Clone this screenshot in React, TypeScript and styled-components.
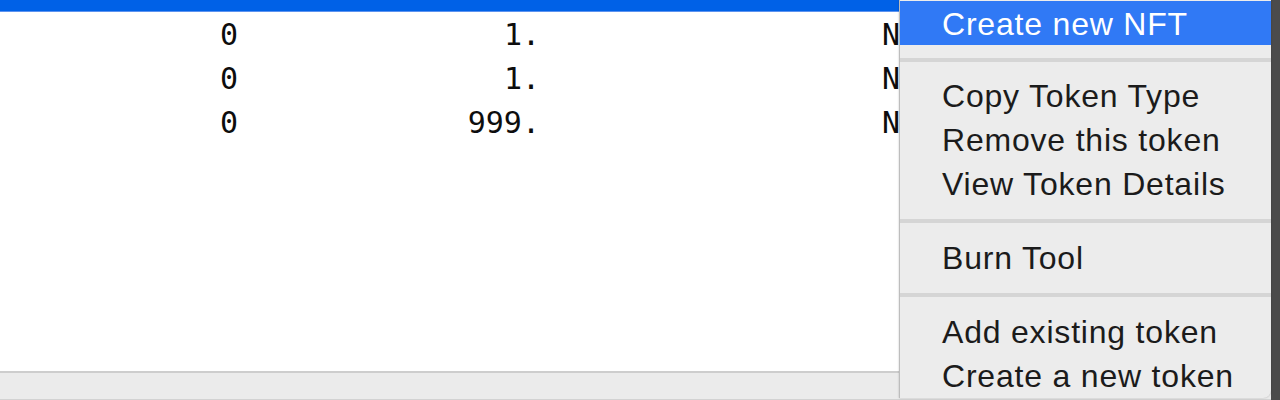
import styled, { createGlobalStyle } from "styled-components";

const GlobalStyle = createGlobalStyle`
  html, body {
    margin: 0;
    padding: 0;
    width: 1280px;
    height: 400px;
    overflow: hidden;
    background: #fff;
  }
`;

const rows = [
  { locked: "0", amount: "1.", kind: "NFT" },
  { locked: "0", amount: "1.", kind: "NFT" },
  { locked: "0", amount: "999.", kind: "NFT" },
];

type MenuEntry = { label: string; active?: boolean } | "sep";

const menu: MenuEntry[] = [
  { label: "Create new NFT", active: true },
  "sep",
  { label: "Copy Token Type" },
  { label: "Remove this token" },
  { label: "View Token Details" },
  "sep",
  { label: "Burn Tool" },
  "sep",
  { label: "Add existing token" },
  { label: "Create a new token" },
];

const App = () => {
  return (
    <>
      <GlobalStyle />
      <Screen>
        <Window>
          <HeaderBar />
          <Table>
            {rows.map((r, i) => (
              <Row key={i}>
                <NumCell>{r.locked}</NumCell>
                <NumCell>{r.amount}</NumCell>
                <Gap />
                <TextCell>{r.kind}</TextCell>
              </Row>
            ))}
          </Table>
          <StatusBar />
        </Window>
        <DesktopEdge />
        <ContextMenu>
          {menu.map((m, i) =>
            m === "sep" ? (
              <Separator key={i} />
            ) : (
              <MenuItem key={i} $active={m.active}>
                {m.label}
              </MenuItem>
            )
          )}
        </ContextMenu>
      </Screen>
    </>
  );
};

const Screen = styled.div`
  position: relative;
  display: flex;
  width: 1280px;
  height: 400px;
  overflow: hidden;
`;

const Window = styled.div`
  flex: 1;
  display: flex;
  flex-direction: column;
  background: #fff;
`;

const HeaderBar = styled.div`
  height: 11px;
  background: #0061e7;
  border-bottom: 1px solid #5d93ef;
`;

const Table = styled.div`
  flex: 1;
  display: flex;
  flex-direction: column;
`;

const Row = styled.div`
  display: grid;
  grid-template-columns: 238px 302px 342px 1fr;
  height: 44px;
  align-items: center;
  font-family: "DejaVu Sans Mono", monospace;
  font-size: 30px;
  color: #0d0d0d;
`;

const NumCell = styled.div`
  text-align: right;
`;

const Gap = styled.div``;

const TextCell = styled.div`
  text-align: left;
`;

const StatusBar = styled.div`
  height: 26px;
  background: #ebebeb;
  border-top: 2px solid #cdcdcd;
  border-bottom: 1px solid #d2d2d2;
`;

const DesktopEdge = styled.div`
  width: 9px;
  background: #4b4b4b;
`;

const ContextMenu = styled.div`
  position: absolute;
  left: 899px;
  top: 0;
  width: 372px;
  height: 398px;
  box-sizing: border-box;
  padding-top: 1px;
  display: flex;
  flex-direction: column;
  background: #ececec;
  border-left: 1px solid #bdbdbd;
  border-bottom-right-radius: 8px;
  box-shadow: 0 0 2px rgba(0, 0, 0, 0.25);
  font-family: "Liberation Sans", Arial, sans-serif;
  font-size: 32px;
  letter-spacing: 0.8px;
`;

const MenuItem = styled.div<{ $active?: boolean }>`
  height: 44px;
  box-sizing: border-box;
  display: flex;
  align-items: center;
  padding-left: 42px;
  padding-top: ${(p) => (p.$active ? "3px" : "0")};
  color: ${(p) => (p.$active ? "#fff" : "#1b1b1b")};
  background: ${(p) => (p.$active ? "#3079f5" : "transparent")};
`;

const Separator = styled.div`
  height: 30px;
  display: flex;
  align-items: center;

  &::after {
    content: "";
    flex: 1;
    height: 4px;
    background: #d5d5d5;
  }
`;

export default App;
